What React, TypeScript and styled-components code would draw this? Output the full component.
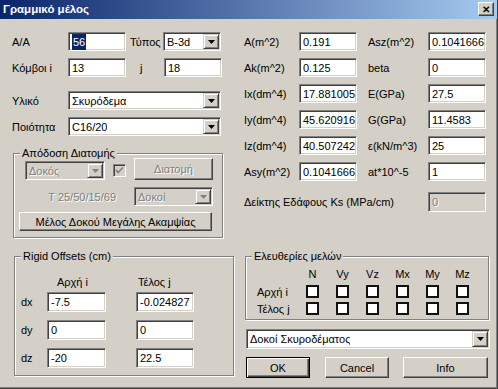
import React from 'react';
import styled, { createGlobalStyle } from 'styled-components';

const GlobalStyle = createGlobalStyle`
  html, body {
    margin: 0;
    padding: 0;
    background: #d4d0c8;
  }
  body {
    font-family: "Liberation Sans", Arial, sans-serif;
    font-size: 11px;
    color: #000;
  }
  * {
    box-sizing: border-box;
  }
`;

const Arrow = ({ disabled }: { disabled?: boolean }) => (
  <svg width="7" height="4" viewBox="0 0 7 4">
    <polygon points="0,0 7,0 3.5,4" fill={disabled ? '#808080' : '#000'} />
  </svg>
);

const Select = ({
  w,
  text,
  disabled,
}: {
  w: number;
  text: string;
  disabled?: boolean;
}) => (
  <SelectBox $w={w} $disabled={disabled}>
    <SelText $disabled={disabled}>{text}</SelText>
    <DropBtn>
      <Arrow disabled={disabled} />
    </DropBtn>
  </SelectBox>
);

const flags = ['N', 'Vy', 'Vz', 'Mx', 'My', 'Mz'];

const App = () => {
  return (
    <Window>
      <GlobalStyle />
      <TitleBar>
        <span>Γραμμικό μέλος</span>
        <CloseBtn>✕</CloseBtn>
      </TitleBar>

      <Content>
        <LeftCol>
          <Row>
            <Label $w={56}>A/A</Label>
            <Field $w={58}>
              <Selected>56</Selected>
            </Field>
            <Label $w={37} $pl={4}>
              Τύπος
            </Label>
            <Select w={58} text="B-3d" />
          </Row>
          <Row $mt={7}>
            <Label $w={56}>Κόμβοι i</Label>
            <Field $w={58}>13</Field>
            <Label $w={38} $pl={14}>
              j
            </Label>
            <Field $w={58}>18</Field>
          </Row>
          <Row $mt={14}>
            <Label $w={56}>Υλικό</Label>
            <Select w={153} text="Σκυρόδεμα" />
          </Row>
          <Row $mt={7}>
            <Label $w={56}>Ποιότητα</Label>
            <Select w={153} text="C16/20" />
          </Row>

          <Group $mt={17} $ml={1} $w={210} $h={85}>
            <Legend>Απόδοση Διατομής</Legend>
            <SectionRow>
              <Select w={80} text="Δοκός" disabled />
              <DisabledCheck>
                <svg width="9" height="9" viewBox="0 0 9 9">
                  <polyline
                    points="1,4 3,6.5 8,1.5"
                    fill="none"
                    stroke="#808080"
                    strokeWidth="1.6"
                  />
                </svg>
              </DisabledCheck>
              <Button $w={79} $h={22} $disabled>
                Διατομή
              </Button>
            </SectionRow>
            <SectionRow $mt={7}>
              <DisabledText>T 25/50/15/69</DisabledText>
              <Select w={79} text="Δοκοί" disabled />
            </SectionRow>
            <WideRow>
              <Button $w={193} $h={19}>
                Μέλος Δοκού Μεγάλης Ακαμψίας
              </Button>
            </WideRow>
          </Group>

          <Group $mt={18} $ml={2} $w={220} $h={120}>
            <Legend>Rigid Offsets (cm)</Legend>
            <OffsetGrid>
              <span />
              <Header $pl={10}>Αρχή i</Header>
              <Header $pl={2}>Τέλος j</Header>
              <Label>dx</Label>
              <Field $w={59} $h={20}>
                -7.5
              </Field>
              <Field $w={58} $h={20}>
                -0.024827
              </Field>
              <Label>dy</Label>
              <Field $w={59} $h={20}>
                0
              </Field>
              <Field $w={58} $h={20}>
                0
              </Field>
              <Label>dz</Label>
              <Field $w={59} $h={20}>
                -20
              </Field>
              <Field $w={58} $h={20}>
                22.5
              </Field>
            </OffsetGrid>
          </Group>
        </LeftCol>

        <RightCol>
          {[
            ['A(m^2)', '0.191', 'Asz(m^2)', '0.1041666'],
            ['Ak(m^2)', '0.125', 'beta', '0'],
            ['Ix(dm^4)', '17.881005', 'E(GPa)', '27.5'],
            ['Iy(dm^4)', '45.620916', 'G(GPa)', '11.4583'],
            ['Iz(dm^4)', '40.507242', 'ε(kN/m^3)', '25'],
            ['Asy(m^2)', '0.1041666', 'at*10^-5', '1'],
          ].map(([l1, v1, l2, v2], i) => (
            <Row key={l1} $mt={i === 0 ? 0 : 7}>
              <Label $w={55}>{l1}</Label>
              <Field $w={58}>{v1}</Field>
              <Label $w={71} $pl={11}>
                {l2}
              </Label>
              <Field $w={58}>{v2}</Field>
            </Row>
          ))}
          <Row $mt={11} $h={20}>
            <Label $w={184}>Δείκτης Εδάφους Ks (MPa/cm)</Label>
            <Field $w={58} $h={20} $disabled>
              0
            </Field>
          </Row>

          <Group $mt={44} $ml={1} $w={244} $h={64}>
            <Legend>Ελευθερίες μελών</Legend>
            <FlagGrid>
              <span />
              {flags.map((f) => (
                <FlagHead key={f}>{f}</FlagHead>
              ))}
              <Label>Αρχή i</Label>
              {flags.map((f) => (
                <Check key={f} />
              ))}
              <Label>Τέλος j</Label>
              {flags.map((f) => (
                <Check key={f} />
              ))}
            </FlagGrid>
          </Group>

          <BottomSelect>
            <Select w={244} text="Δοκοί Σκυροδέματος" />
          </BottomSelect>

          <ButtonRow>
            <Button $w={64} $h={21} $default>
              OK
            </Button>
            <Button $w={64} $h={21}>
              Cancel
            </Button>
            <Button $w={85} $h={21}>
              Info
            </Button>
          </ButtonRow>
        </RightCol>
      </Content>
    </Window>
  );
};

export default App;

const Window = styled.div`
  width: 498px;
  height: 389px;
  background: #d4d0c8;
  border-right: 1px solid #404040;
  border-bottom: 1px solid #404040;
  box-shadow: inset -1px -1px #808080;
  display: flex;
  flex-direction: column;
  overflow: hidden;
`;

const TitleBar = styled.div`
  height: 19px;
  flex: none;
  display: flex;
  align-items: center;
  justify-content: space-between;
  padding: 0 3px 1px 3px;
  background: linear-gradient(to right, #0a246a, #a6caf0);
  color: #fff;
  font-weight: bold;
  font-size: 11.5px;
`;

const CloseBtn = styled.div`
  width: 16px;
  height: 14px;
  display: flex;
  align-items: center;
  justify-content: center;
  background: #d4d0c8;
  color: #000;
  font-size: 10px;
  font-weight: bold;
  border-top: 1px solid #fff;
  border-left: 1px solid #fff;
  border-right: 1px solid #404040;
  border-bottom: 1px solid #404040;
  box-shadow: inset -1px -1px #808080;
`;

const Content = styled.div`
  display: flex;
  gap: 10px;
  padding: 13px 0 0 12px;
`;

const LeftCol = styled.div`
  width: 222px;
  display: flex;
  flex-direction: column;
`;

const RightCol = styled.div`
  width: 246px;
  display: flex;
  flex-direction: column;
`;

const Row = styled.div<{ $mt?: number; $h?: number }>`
  display: flex;
  align-items: center;
  height: ${({ $h }) => $h ?? 19}px;
  margin-top: ${({ $mt }) => $mt ?? 0}px;
`;

const Label = styled.div<{ $w?: number; $pl?: number }>`
  width: ${({ $w }) => ($w ? `${$w}px` : 'auto')};
  padding-left: ${({ $pl }) => $pl ?? 0}px;
  white-space: nowrap;
  flex: none;
`;

const Field = styled.div<{ $w: number; $h?: number; $disabled?: boolean }>`
  width: ${({ $w }) => $w}px;
  height: ${({ $h }) => $h ?? 19}px;
  flex: none;
  display: flex;
  align-items: center;
  padding: 0 3px;
  background: ${({ $disabled }) => ($disabled ? '#d4d0c8' : '#fff')};
  color: ${({ $disabled }) => ($disabled ? '#808080' : '#000')};
  text-shadow: ${({ $disabled }) => ($disabled ? '1px 1px #fff' : 'none')};
  border-top: 1px solid #808080;
  border-left: 1px solid #808080;
  border-bottom: 1px solid #fff;
  border-right: 1px solid #fff;
  box-shadow: inset 1px 1px #404040, inset -1px -1px #d4d0c8;
  white-space: nowrap;
  overflow: hidden;
`;

const Selected = styled.span`
  background: #0a246a;
  color: #fff;
  padding: 2px 1px;
`;

const SelectBox = styled(Field)`
  padding: 1px 1px 1px 0;
  justify-content: space-between;
`;

const SelText = styled.span<{ $disabled?: boolean }>`
  padding-left: 3px;
  overflow: hidden;
  color: ${({ $disabled }) => ($disabled ? '#808080' : '#000')};
`;

const DropBtn = styled.div`
  width: 16px;
  height: 100%;
  flex: none;
  display: flex;
  align-items: center;
  justify-content: center;
  background: #d4d0c8;
  border-top: 1px solid #d4d0c8;
  border-left: 1px solid #d4d0c8;
  border-right: 1px solid #404040;
  border-bottom: 1px solid #404040;
  box-shadow: inset 1px 1px #fff, inset -1px -1px #808080;
`;

const Button = styled.div<{
  $w: number;
  $h: number;
  $disabled?: boolean;
  $default?: boolean;
}>`
  width: ${({ $w }) => $w}px;
  height: ${({ $h }) => $h}px;
  flex: none;
  display: flex;
  align-items: center;
  justify-content: center;
  background: #d4d0c8;
  color: ${({ $disabled }) => ($disabled ? '#808080' : '#000')};
  text-shadow: ${({ $disabled }) => ($disabled ? '1px 1px #fff' : 'none')};
  white-space: nowrap;
  ${({ $default }) =>
    $default
      ? `
    border: 1px solid #000;
    box-shadow: inset 1px 1px #fff, inset -1px -1px #404040, inset -2px -2px #808080;
  `
      : `
    border-top: 1px solid #fff;
    border-left: 1px solid #fff;
    border-right: 1px solid #404040;
    border-bottom: 1px solid #404040;
    box-shadow: inset -1px -1px #808080;
  `}
`;

const Group = styled.div<{ $mt: number; $ml: number; $w: number; $h: number }>`
  position: relative;
  margin-top: ${({ $mt }) => $mt}px;
  margin-left: ${({ $ml }) => $ml}px;
  width: ${({ $w }) => $w}px;
  height: ${({ $h }) => $h}px;
  flex: none;
  border: 1px solid #808080;
  box-shadow: inset 1px 1px #fff, 1px 1px #fff;
`;

const Legend = styled.div`
  position: absolute;
  top: -7px;
  left: 6px;
  padding: 0 2px;
  background: #d4d0c8;
  line-height: 13px;
  white-space: nowrap;
`;

const SectionRow = styled.div<{ $mt?: number }>`
  display: flex;
  align-items: flex-end;
  justify-content: flex-end;
  gap: 8px;
  margin-top: ${({ $mt }) => $mt ?? 4}px;
  padding-right: 9px;
`;

const DisabledCheck = styled.div`
  width: 13px;
  height: 13px;
  align-self: center;
  margin-top: 3px;
  display: flex;
  align-items: center;
  justify-content: center;
  background: #d4d0c8;
  border-top: 1px solid #808080;
  border-left: 1px solid #808080;
  border-bottom: 1px solid #fff;
  border-right: 1px solid #fff;
  box-shadow: inset 1px 1px #404040, inset -1px -1px #d4d0c8;
`;

const DisabledText = styled.div`
  align-self: center;
  margin-right: 10px;
  color: #808080;
  text-shadow: 1px 1px #fff;
  white-space: nowrap;
`;

const WideRow = styled.div`
  display: flex;
  margin-top: 6px;
  padding-left: 5px;
`;

const OffsetGrid = styled.div`
  display: grid;
  grid-template-columns: 26px 89px 58px;
  grid-template-rows: 16px 20px 20px 20px;
  row-gap: 8px;
  align-items: center;
  padding: 11px 0 0 6px;
  & > div:first-of-type {
    align-self: end;
  }
`;

const Header = styled.div<{ $pl: number }>`
  padding-left: ${({ $pl }) => $pl}px;
  white-space: nowrap;
  align-self: end;
  margin-bottom: -4px;
`;

const FlagGrid = styled.div`
  display: grid;
  grid-template-columns: 49px repeat(6, 30px);
  grid-template-rows: 14px 13px 13px;
  row-gap: 4px;
  align-items: center;
  padding: 10px 0 0 11px;
`;

const FlagHead = styled.div`
  width: 13px;
  display: flex;
  justify-content: center;
  white-space: nowrap;
`;

const Check = styled.div`
  width: 13px;
  height: 13px;
  background: #fff;
  border: 2px solid #111;
`;

const BottomSelect = styled.div`
  margin-top: 9px;
  margin-left: 2px;
  display: flex;
  & > div {
    height: 20px;
  }
`;

const ButtonRow = styled.div`
  display: flex;
  margin-top: 8px;
  margin-left: 2px;
  gap: 15px;
  & > div:last-child {
    margin-left: -1px;
  }
`;
